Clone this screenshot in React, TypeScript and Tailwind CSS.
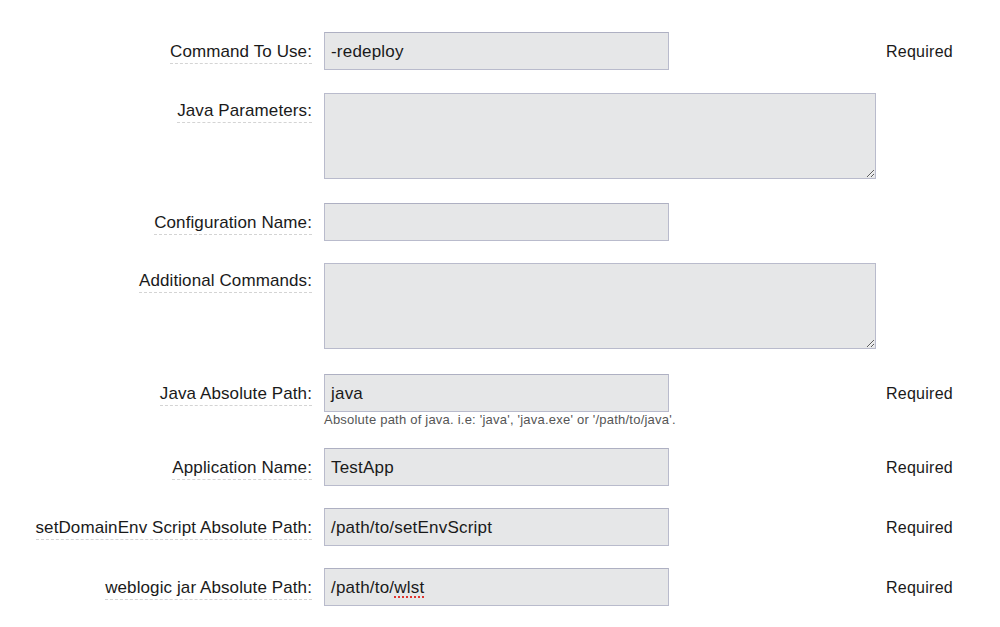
import React from "react";

type Row = {
  label: string;
  value?: React.ReactNode;
  area?: boolean;
  required?: boolean;
  help?: string;
  mt: string;
};

const rows: Row[] = [
  { label: "Command To Use:", value: "-redeploy", required: true, mt: "mt-[32px]" },
  { label: "Java Parameters:", area: true, mt: "mt-[23px]" },
  { label: "Configuration Name:", value: "", mt: "mt-[24px]" },
  { label: "Additional Commands:", area: true, mt: "mt-[22px]" },
  {
    label: "Java Absolute Path:",
    value: "java",
    required: true,
    help: "Absolute path of java. i.e: 'java', 'java.exe' or '/path/to/java'.",
    mt: "mt-[25px]",
  },
  { label: "Application Name:", value: "TestApp", required: true, mt: "mt-[21px]" },
  { label: "setDomainEnv Script Absolute Path:", value: "/path/to/setEnvScript", required: true, mt: "mt-[22px]" },
  {
    label: "weblogic jar Absolute Path:",
    value: (
      <>
        /path/to/
        <span className="underline decoration-dotted decoration-[#e0342f] decoration-2 underline-offset-[3px]">wlst</span>
      </>
    ),
    required: true,
    mt: "mt-[22px]",
  },
];

export default function App() {
  return (
    <div
      className="w-[1000px] h-[627px] bg-white overflow-hidden text-[#1a1a1a]"
      style={{ fontFamily: '"Liberation Sans", Arial, Helvetica, sans-serif' }}
    >
      <div className="flex flex-col">
        {rows.map((r, i) => (
          <div key={i} className={`flex items-start ${r.mt}`}>
            <div className={`w-[312px] flex justify-end ${r.area ? "pt-[8px]" : "pt-[10px]"}`}>
              <span className="text-[17px] leading-[19px] tracking-[0.1px] border-b border-dashed border-[#d4d4d4] pb-[2px]">
                {r.label}
              </span>
            </div>
            <div className="ml-[12px] w-[552px] flex flex-col">
              {r.area ? (
                <textarea
                  readOnly
                  className="w-[552px] h-[86px] bg-[#e6e7e8] border border-[#b9bbcc] outline-none resize-y block"
                />
              ) : (
                <div className="w-[345px] h-[38px] bg-[#e6e7e8] border border-[#b9bbcc] border-t-[#aeb0c2] flex items-center px-[6px] pt-[2px] text-[17px] tracking-[0.2px] text-[#1a1a1a]">
                  {r.value}
                </div>
              )}
              {r.help && (
                <div className="text-[13px] leading-[15px] tracking-[0.22px] text-[#555] mt-[0px]">{r.help}</div>
              )}
            </div>
            {r.required && (
              <div className="ml-[10px] h-[38px] pt-[2px] flex items-center text-[16px] tracking-[0.25px]">Required</div>
            )}
          </div>
        ))}
      </div>
    </div>
  );
}
